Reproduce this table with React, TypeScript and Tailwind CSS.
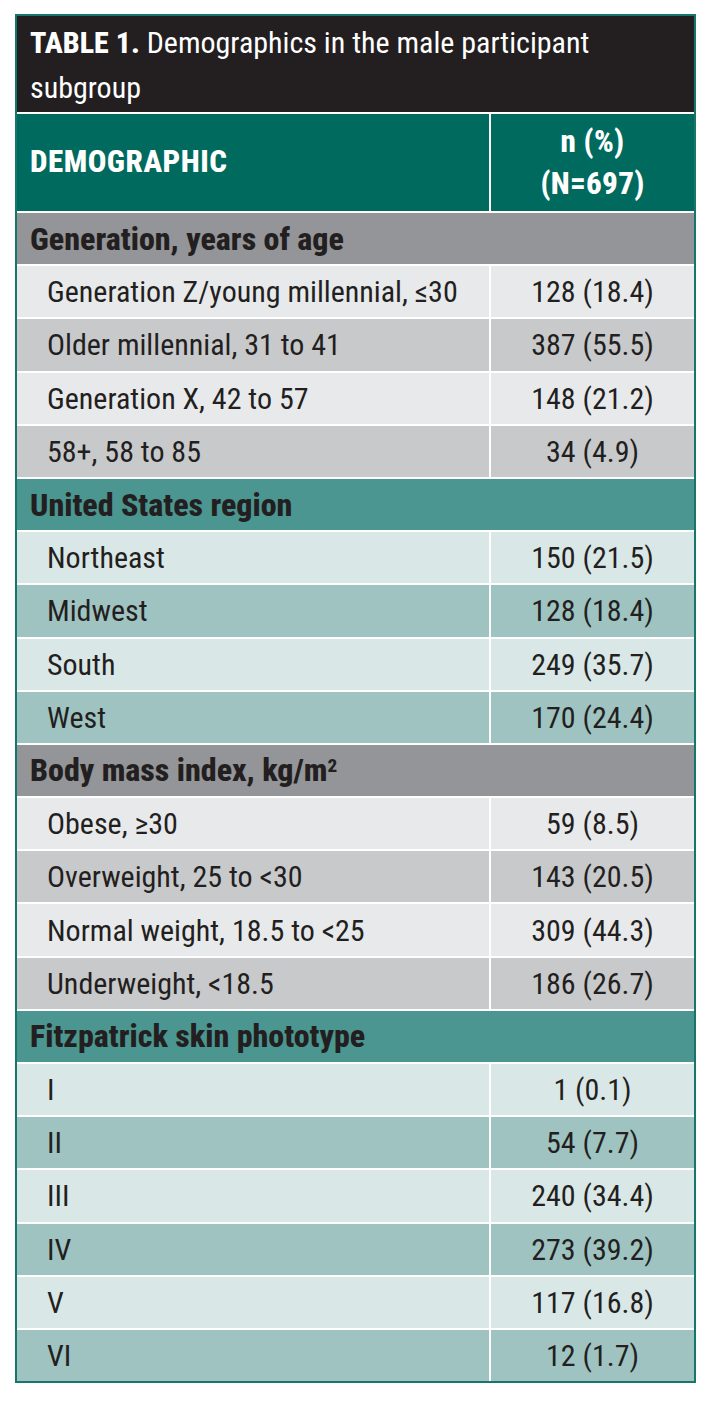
import React from 'react';

const font = { fontFamily: '"Roboto Condensed", "Liberation Sans Narrow", "DejaVu Sans Condensed", "Liberation Sans", sans-serif' };

type Row = { label: string; value: string };
type Section = { title: React.ReactNode; head: string; light: string; dark: string; rows: Row[] };

const sections: Section[] = [
  {
    title: 'Generation, years of age',
    head: 'bg-[#939598]',
    light: 'bg-[#e8e9eb]',
    dark: 'bg-[#c8c9cb]',
    rows: [
      { label: 'Generation Z/young millennial, ≤30', value: '128 (18.4)' },
      { label: 'Older millennial, 31 to 41', value: '387 (55.5)' },
      { label: 'Generation X, 42 to 57', value: '148 (21.2)' },
      { label: '58+, 58 to 85', value: '34 (4.9)' },
    ],
  },
  {
    title: 'United States region',
    head: 'bg-[#4b9690]',
    light: 'bg-[#dae7e7]',
    dark: 'bg-[#9fc3c1]',
    rows: [
      { label: 'Northeast', value: '150 (21.5)' },
      { label: 'Midwest', value: '128 (18.4)' },
      { label: 'South', value: '249 (35.7)' },
      { label: 'West', value: '170 (24.4)' },
    ],
  },
  {
    title: (
      <>
        Body mass index, kg/m<sup className="text-[0.6em]">2</sup>
      </>
    ),
    head: 'bg-[#939598]',
    light: 'bg-[#e8e9eb]',
    dark: 'bg-[#c8c9cb]',
    rows: [
      { label: 'Obese, ≥30', value: '59 (8.5)' },
      { label: 'Overweight, 25 to <30', value: '143 (20.5)' },
      { label: 'Normal weight, 18.5 to <25', value: '309 (44.3)' },
      { label: 'Underweight, <18.5', value: '186 (26.7)' },
    ],
  },
  {
    title: 'Fitzpatrick skin phototype',
    head: 'bg-[#4b9690]',
    light: 'bg-[#dae7e7]',
    dark: 'bg-[#9fc3c1]',
    rows: [
      { label: 'I', value: '1 (0.1)' },
      { label: 'II', value: '54 (7.7)' },
      { label: 'III', value: '240 (34.4)' },
      { label: 'IV', value: '273 (39.2)' },
      { label: 'V', value: '117 (16.8)' },
      { label: 'VI', value: '12 (1.7)' },
    ],
  },
];

export default function App() {
  return (
    <div className="w-[714px] h-[1401px] bg-white pt-[14px] pl-[15px]" style={font}>
      <div className="w-[681px] border-2 border-[#17766c] bg-white grid grid-cols-[472px_1fr] gap-[2px] text-[#231f20]">
        <div className="col-span-2 h-[96px] bg-[#231f20] text-white text-[30px] leading-[45px] px-[13px] pt-[4px]">
          <span className="font-extrabold">TABLE 1.</span> Demographics in the male participant
          <br />
          subgroup
        </div>

        <div className="h-[97px] bg-[#006a5e] text-white font-extrabold text-[31px] flex items-center px-[13px] tracking-[0.5px]">
          DEMOGRAPHIC
        </div>
        <div className="h-[97px] bg-[#006a5e] text-white font-extrabold text-[31px] leading-[42px] flex flex-col items-center justify-center tracking-[0.3px]">
          <span>n (%)</span>
          <span>(N=697)</span>
        </div>

        {sections.map((s, i) => (
          <React.Fragment key={i}>
            <div className={`col-span-2 h-[51.2px] ${s.head} font-extrabold text-[32px] flex items-center px-[13px]`}>
              <span>{s.title}</span>
            </div>
            {s.rows.map((r, j) => {
              const bg = j % 2 === 0 ? s.light : s.dark;
              return (
                <React.Fragment key={j}>
                  <div className={`h-[51.2px] ${bg} text-[30px] flex items-center pl-[30px]`}>{r.label}</div>
                  <div className={`h-[51.2px] ${bg} text-[30px] flex items-center justify-center`}>{r.value}</div>
                </React.Fragment>
              );
            })}
          </React.Fragment>
        ))}
      </div>
    </div>
  );
}
